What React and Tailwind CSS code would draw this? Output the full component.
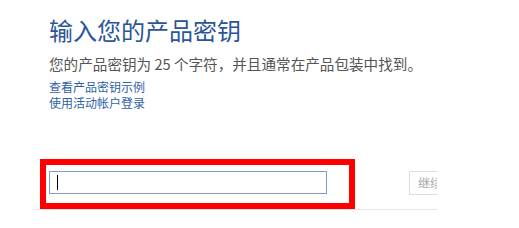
export default function App() {
  return (
    <div
      className="w-[519px] h-[228px] bg-white overflow-hidden"
      style={{ fontFamily: '"Microsoft YaHei", "Noto Sans CJK SC", "Noto Sans", sans-serif' }}
    >
      <div className="w-[437px] overflow-hidden">
        <div className="pl-[49px] pt-[14px]">
          <h1 className="text-[24px] leading-[32px] text-[#2c5597] font-normal">
            输入您的产品密钥
          </h1>
          <p className="mt-[8px] text-[14.6px] leading-[20px] text-[#555] whitespace-nowrap">
            您的产品密钥为 25 个字符，并且通常在产品包装中找到。
          </p>
          <div className="mt-[5px] flex flex-col text-[12px] leading-[16px] text-[#2e62a8]">
            <a href="#" className="block">查看产品密钥示例</a>
            <a href="#" className="block">使用活动帐户登录</a>
          </div>
        </div>

        {/* Key input row */}
        <div className="mt-[48px] ml-[33px] w-[404px] flex items-start border-b border-[#e6e6e6] pl-[7px]">
          <div className="w-[315px] h-[50px] shrink-0 border-[6px] border-[#ff0000] pl-[3px] pt-[6px]">
            <div className="w-[278px] h-[23px] border border-[#7f9dc9] bg-white flex items-center pl-[7px]">
              <span className="w-[1px] h-[15px] bg-black"></span>
            </div>
          </div>
          <button
            type="button"
            className="ml-[54px] mt-[12px] h-[24px] shrink-0 border border-[#dcdcdc] bg-white px-[8px] text-[12px] text-[#aaa] leading-[22px] whitespace-nowrap"
          >
            继续
          </button>
        </div>
      </div>
    </div>
  );
}
